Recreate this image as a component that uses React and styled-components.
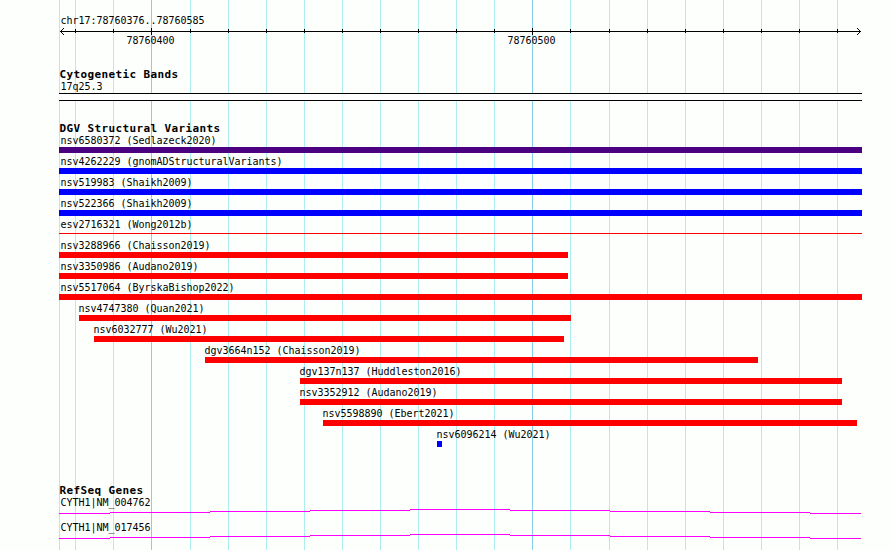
import styled, { createGlobalStyle } from "styled-components";

const LEFT = 59;
const WIDTH = 803;

const gridLines = [
    59, 75, 113, 151, 190, 228, 266, 304, 342, 380, 418,
    456, 494, 532, 570, 609, 647, 685, 723, 761, 799, 837,
];
const majorLines = [151, 532];

const variants = [
    { name: "nsv6580372 (Sedlazeck2020)", start: 59, end: 862, color: "#4b0082" },
    { name: "nsv4262229 (gnomADStructuralVariants)", start: 59, end: 862, color: "#0000ff" },
    { name: "nsv519983 (Shaikh2009)", start: 59, end: 862, color: "#0000ff" },
    { name: "nsv522366 (Shaikh2009)", start: 59, end: 862, color: "#0000ff" },
    { name: "esv2716321 (Wong2012b)", start: 59, end: 862, color: "#ff0000", thin: true },
    { name: "nsv3288966 (Chaisson2019)", start: 59, end: 568, color: "#ff0000" },
    { name: "nsv3350986 (Audano2019)", start: 59, end: 568, color: "#ff0000" },
    { name: "nsv5517064 (ByrskaBishop2022)", start: 59, end: 862, color: "#ff0000" },
    { name: "nsv4747380 (Quan2021)", start: 79, end: 571, color: "#ff0000" },
    { name: "nsv6032777 (Wu2021)", start: 94, end: 564, color: "#ff0000" },
    { name: "dgv3664n152 (Chaisson2019)", start: 205, end: 758, color: "#ff0000" },
    { name: "dgv137n137 (Huddleston2016)", start: 300, end: 842, color: "#ff0000" },
    { name: "nsv3352912 (Audano2019)", start: 300, end: 842, color: "#ff0000" },
    { name: "nsv5598890 (Ebert2021)", start: 323, end: 857, color: "#ff0000" },
    { name: "nsv6096214 (Wu2021)", start: 437, end: 442, color: "#0000ff" },
];

const genes = ["CYTH1|NM_004762", "CYTH1|NM_017456"];

export default function App() {
    return (
        <>
            <GlobalStyle />
            <Browser>
                <Grid />
                <Tracks>
                    <Region>
                        <Label $inset={1.5}>chr17:78760376..78760585</Label>
                        <Ruler />
                        <Scale>
                            <Label>78760400</Label>
                            <Label>78760500</Label>
                        </Scale>
                    </Region>

                    <Bands>
                        <Title>Cytogenetic Bands</Title>
                        <Label $inset={1.5}>17q25.3</Label>
                        <Band />
                    </Bands>

                    <Variants>
                        <Title>DGV Structural Variants</Title>
                        {variants.map((v) => (
                            <Variant key={v.name} $start={v.start}>
                                <Label $inset={v.start === LEFT ? 1.5 : -0.5}>{v.name}</Label>
                                <Bar $length={v.end - v.start} $color={v.color} $thin={v.thin} />
                            </Variant>
                        ))}
                    </Variants>

                    <Genes>
                        <Title>RefSeq Genes</Title>
                        {genes.map((name) => (
                            <Gene key={name}>
                                <Label $inset={1.5}>{name}</Label>
                                <Intron />
                            </Gene>
                        ))}
                    </Genes>
                </Tracks>
            </Browser>
        </>
    );
}

function Grid() {
    return (
        <GridSvg width="890" height="550" shapeRendering="crispEdges">
            {gridLines.map((x) => (
                <rect
                    key={x}
                    x={x}
                    width="1"
                    height="550"
                    fill={majorLines.includes(x) ? "#87ceeb" : "#afeeee"}
                />
            ))}
        </GridSvg>
    );
}

function Ruler() {
    return (
        <RulerSvg width={WIDTH} height="7" shapeRendering="crispEdges">
            <rect x="1" y="3" width="801" height="1" />
            {gridLines.slice(1).map((x) =>
                majorLines.includes(x) ? (
                    <rect key={x} x={x - LEFT} y="0" width="1" height="7" />
                ) : (
                    <rect key={x} x={x - LEFT} y="1" width="1" height="4" />
                )
            )}
            {[0, 1, 2, 3].map((i) => (
                <g key={i}>
                    <rect x={1 + i} y={3 - i} width="1" height="1" />
                    <rect x={1 + i} y={3 + i} width="1" height="1" />
                    <rect x={801 - i} y={3 - i} width="1" height="1" />
                    <rect x={801 - i} y={3 + i} width="1" height="1" />
                </g>
            ))}
        </RulerSvg>
    );
}

function Intron() {
    return (
        <IntronSvg width={WIDTH} height="5" shapeRendering="crispEdges" fill="#ff00ff">
            {[4, 3, 2, 1, 0, 1, 2, 3, 4].map((y, i) => {
                const from = Math.max(0, i * 100 - 49);
                const to = Math.min(802, i * 100 + 51);
                return <rect key={i} x={from} y={y} width={to - from} height="1" />;
            })}
        </IntronSvg>
    );
}

const GlobalStyle = createGlobalStyle`
    body {
        margin: 0;
        background: #fdfffc;
    }
`;

const Browser = styled.main`
    position: relative;
    width: 890px;
    height: 550px;
    overflow: hidden;
    color: #000;
`;

const GridSvg = styled.svg`
    position: absolute;
    top: 0;
    left: 0;
`;

const Tracks = styled.div`
    position: relative;
    width: ${WIDTH}px;
    margin-left: ${LEFT}px;
    padding-top: 15px;
`;

const Region = styled.section`
    height: 53px;
`;

const Bands = styled.section`
    height: 54px;
`;

const Variants = styled.section`
    height: 362px;
`;

const Genes = styled.section``;

const Title = styled.h2`
    height: 13px;
    margin: 0;
    font: bold 11px/13px "DejaVu Sans Mono", monospace;
    letter-spacing: 0.378px;
    text-indent: 0.4px;
    white-space: pre;
`;

const Label = styled.div`
    height: 12px;
    font: 10px/12px "DejaVu Sans Mono", monospace;
    letter-spacing: -0.02px;
    text-indent: ${(p) => p.$inset || 0}px;
    white-space: pre;
`;

const RulerSvg = styled.svg`
    display: block;
    margin-top: 1px;
`;

const Scale = styled.div`
    display: flex;
    gap: 333px;
    padding-left: 67.5px;
`;

const Band = styled.div`
    box-sizing: border-box;
    height: 8px;
    border: solid #000;
    border-width: 1px 0;
    background: #fff;
`;

const Variant = styled.div`
    height: 21px;
    margin-left: ${(p) => p.$start - LEFT}px;
`;

const Bar = styled.div`
    width: ${(p) => p.$length}px;
    height: ${(p) => (p.$thin ? 1 : 6)}px;
    margin-top: ${(p) => (p.$thin ? 2 : 0)}px;
    background: ${(p) => p.$color};
`;

const Gene = styled.div`
    height: 25px;
`;

const IntronSvg = styled.svg`
    display: block;
`;
